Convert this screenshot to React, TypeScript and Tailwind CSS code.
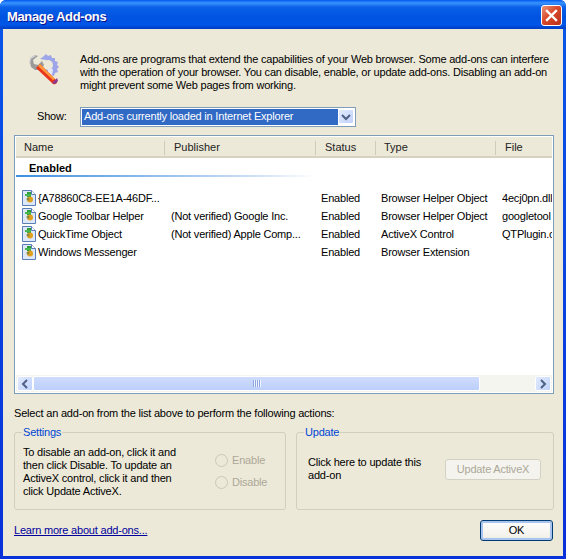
const FONT = "font-['Liberation_Sans',Arial,sans-serif]"

const columns = [
  { label: "Name", width: "w-[149px] pl-[8px]" },
  { label: "Publisher", width: "w-[151px] pl-[9px]" },
  { label: "Status", width: "w-[60px] pl-[9px]" },
  { label: "Type", width: "w-[120px] pl-[8px]" },
  { label: "File", width: "flex-1 pl-[9px]" },
]

const rows = [
  { name: "{A78860C8-EE1A-46DF...", publisher: "", status: "Enabled", type: "Browser Helper Object", file: "4ecj0pn.dll" },
  { name: "Google Toolbar Helper", publisher: "(Not verified) Google Inc.", status: "Enabled", type: "Browser Helper Object", file: "googletool" },
  { name: "QuickTime Object", publisher: "(Not verified) Apple Comp...", status: "Enabled", type: "ActiveX Control", file: "QTPlugin.ocx" },
  { name: "Windows Messenger", publisher: "", status: "Enabled", type: "Browser Extension", file: "" },
]

function ToolsIcon() {
  return (
    <svg width="34" height="34" viewBox="0 0 34 34" className="shrink-0">
      <path d="M18 4l2-2 2 2 3-1 1 3 3 0 0 3 3 1-1 3 2 2-2 2 1 3-3 1-1 3-3-1-2 2-6-8 4-3-1-6-6-1z" fill="#9ea5e8" />
      <circle cx="22" cy="13" r="5" fill="#ece9d8" />
      <path d="M22 16l5 1 -1 6-4-2z" fill="#e6e8f4" />
      <path d="M4 6l5-3 3 1-5 4 1 4 4 1 4-4 2 4-2 4-5 1-2 0-4-3-1-5z" fill="#9a9a9a" />
      <path d="M4 6l5-3 1 1-5 3-1 5-1-1z" fill="#d4d4d4" />
      <path d="M10 16l4-4 17 17c1 2-2 4-4 3z" fill="#e8351c" />
      <path d="M12 14l2-2 15 15-2 1z" fill="#ff9a3c" />
      <path d="M26 31l5-5 1 3-3 3z" fill="#8b3a8f" />
    </svg>
  )
}

function AddonIcon() {
  return (
    <svg width="14" height="16" viewBox="0 0 14 16" className="shrink-0">
      <path d="M0.5 0.5h9l4 4v11h-13z" fill="#dce8f8" stroke="#5a7fb8" />
      <path d="M9.5 0.5v4h4" fill="#ffffff" stroke="#5a7fb8" />
      <rect x="5" y="2" width="4" height="5" fill="#2e9e3a" />
      <rect x="3" y="4" width="6" height="2" fill="#46b84f" />
      <circle cx="8" cy="9.5" r="3" fill="#e0a020" />
      <circle cx="6" cy="9" r="1.5" fill="#8a8a3a" />
    </svg>
  )
}

function CloseButton() {
  return (
    <div className="mt-[1px] flex h-[21px] w-[21px] items-center justify-center rounded-[3px] border border-white bg-[linear-gradient(135deg,#e9967a,#d9482a_45%,#b8321a)]">
      <svg width="13" height="13" viewBox="0 0 13 13">
        <path d="M2 2l9 9M11 2l-9 9" stroke="#ffffff" strokeWidth="2.4" strokeLinecap="square" />
      </svg>
    </div>
  )
}

function ScrollButton({ direction }: { direction: "left" | "right" | "down" }) {
  const d = direction === "left" ? "M8 2L4 6l4 4" : direction === "right" ? "M4 2l4 4-4 4" : "M2 4l4 4 4-4"
  return (
    <div className="flex h-[15px] w-[16px] shrink-0 items-center justify-center rounded-[2px] border border-white bg-[linear-gradient(135deg,#e1eafe,#c1d2fc)]">
      <svg width="12" height="12" viewBox="0 0 12 12">
        <path d={d} fill="none" stroke="#4d6185" strokeWidth="2" />
      </svg>
    </div>
  )
}

function Radio({ label }: { label: string }) {
  return (
    <div className="flex items-center gap-[4px] text-[#aca899]">
      <span className="h-[13px] w-[13px] rounded-full border border-[#cac8bb]" />
      <span>{label}</span>
    </div>
  )
}

function GroupBox({ title, className, children }: { title: string; className: string; children: React.ReactNode }) {
  return (
    <fieldset className={`h-[84px] rounded-[3px] border border-[#d0d0bf] ${className}`}>
      <legend className="ml-[7px] px-[1px] leading-[13px] text-[#0046d5]">{title}</legend>
      {children}
    </fieldset>
  )
}

export default function App() {
  return (
    <div className={`flex h-[559px] w-[566px] flex-col overflow-hidden rounded-t-[6px] bg-[linear-gradient(180deg,#0a56e8,#0831d9)] text-[11px] leading-[13px] tracking-[-0.2px] text-black ${FONT}`}>
      <div className="flex h-[29px] shrink-0 items-center justify-between bg-[linear-gradient(180deg,#0058ee_0%,#3a93ff_10%,#0a60e8_25%,#0053e0_60%,#0056e8_85%,#003dc4_100%)] pl-[7px] pr-[4px]">
        <span className="pt-[3px] text-[13px] font-bold tracking-[-0.35px] text-white [text-shadow:1px_1px_#0f1089]">Manage Add-ons</span>
        <CloseButton />
      </div>

      <div className="mx-[3px] mb-[3px] flex flex-1 flex-col bg-[#ece9d8] pl-[11px] pr-[9px]">
        <div className="flex h-[74px] shrink-0 items-start pt-[24px]">
          <div className="ml-[12px] mr-[20px] -mt-[1px] w-[34px]">
            <ToolsIcon />
          </div>
          <p className="w-[480px]">
            Add-ons are programs that extend the capabilities of your Web browser. Some add-ons can interfere with the operation of your browser. You can disable, enable, or update add-ons. Disabling an add-on might prevent some Web pages from working.
          </p>
        </div>

        <div className="flex h-[27px] shrink-0 items-center">
          <span className="ml-[23px] w-[43px]">Show:</span>
          <div className="flex h-[20px] w-[276px] items-center border border-[#7f9db9] bg-white p-[1px]">
            <div className="flex h-full flex-1 items-center bg-[#316ac5] pl-[2px] text-white">Add-ons currently loaded in Internet Explorer</div>
            <ScrollButton direction="down" />
          </div>
        </div>

        <div className="mt-[5px] flex h-[259px] shrink-0 flex-col border border-[#7f9db9] bg-white p-[1px]">
          <div className="flex h-[21px] shrink-0 border-b-2 border-[#d6d2c2] bg-[#ece9d8] pt-[2px] tracking-normal">
            {columns.map((col, i) => (
              <div key={col.label} className={`flex h-[14px] items-center self-center text-[#222] ${col.width} ${i < columns.length - 1 ? "border-r border-[#cfccbc]" : ""}`}>
                {col.label}
              </div>
            ))}
          </div>

          <div className="flex-1 overflow-hidden">
            <div className="mt-[4px] pl-[13px] font-bold tracking-normal">Enabled</div>
            <div className="h-[2px] bg-[linear-gradient(90deg,#3c8fe0,#cfe0f6_45%,#ffffff_56%)]" />
            <div className="mt-[12px] pl-[6px]">
              {rows.map((row) => (
                <div key={row.name} className="flex h-[18px] items-center whitespace-nowrap">
                  <AddonIcon />
                  <span className="ml-[2px] w-[133px]">{row.name}</span>
                  <span className="w-[150px]">{row.publisher}</span>
                  <span className="w-[60px]">{row.status}</span>
                  <span className="w-[121px]">{row.type}</span>
                  <span className="w-[50px] overflow-hidden">{row.file}</span>
                </div>
              ))}
            </div>
          </div>

          <div className="flex h-[17px] shrink-0 items-center bg-[#f5f5ef] px-[1px]">
            <ScrollButton direction="left" />
            <div className="flex h-[15px] w-[447px] items-center justify-center rounded-[2px] border border-white bg-[linear-gradient(180deg,#cfdcfd,#bccffb)]">
              <span className="h-[7px] w-[8px] bg-[repeating-linear-gradient(90deg,#8ea7e0_0_1px,#eef3ff_1px_2px)]" />
            </div>
            <div className="flex-1" />
            <ScrollButton direction="right" />
          </div>
        </div>

        <p className="mt-[13px]">Select an add-on from the list above to perform the following actions:</p>

        <div className="mt-[6px] flex gap-[10px]">
          <GroupBox title="Settings" className="w-[272px]">
            <div className="flex">
              <p className="ml-[8px] mt-[7px] w-[170px]">To disable an add-on, click it and then click Disable. To update an ActiveX control, click it and then click Update ActiveX.</p>
              <div className="ml-[22px] mt-[15px] flex flex-col gap-[9px]">
                <Radio label="Enable" />
                <Radio label="Disable" />
              </div>
            </div>
          </GroupBox>
          <GroupBox title="Update" className="w-[258px]">
            <div className="flex">
              <p className="ml-[11px] mt-[17px] w-[125px]">Click here to update this add-on</p>
              <div className="ml-[12px] mt-[20px] flex h-[21px] w-[96px] items-center justify-center rounded-[3px] border border-[#d3d1c4] bg-[#f4f3ee] text-[#aca899]">Update ActiveX</div>
            </div>
          </GroupBox>
        </div>

        <div className="mt-[10px] flex items-start justify-between">
          <a className="mt-[4px] text-[#00009c] underline">Learn more about add-ons...</a>
          <div className="mr-[1px] flex h-[21px] w-[73px] items-center justify-center rounded-[3px] border border-[#003c74] bg-[linear-gradient(180deg,#ffffff,#f2f1ea_85%,#dcd8c8)] shadow-[inset_0_0_0_2px_#a9c4ee]">OK</div>
        </div>
      </div>
    </div>
  )
}
